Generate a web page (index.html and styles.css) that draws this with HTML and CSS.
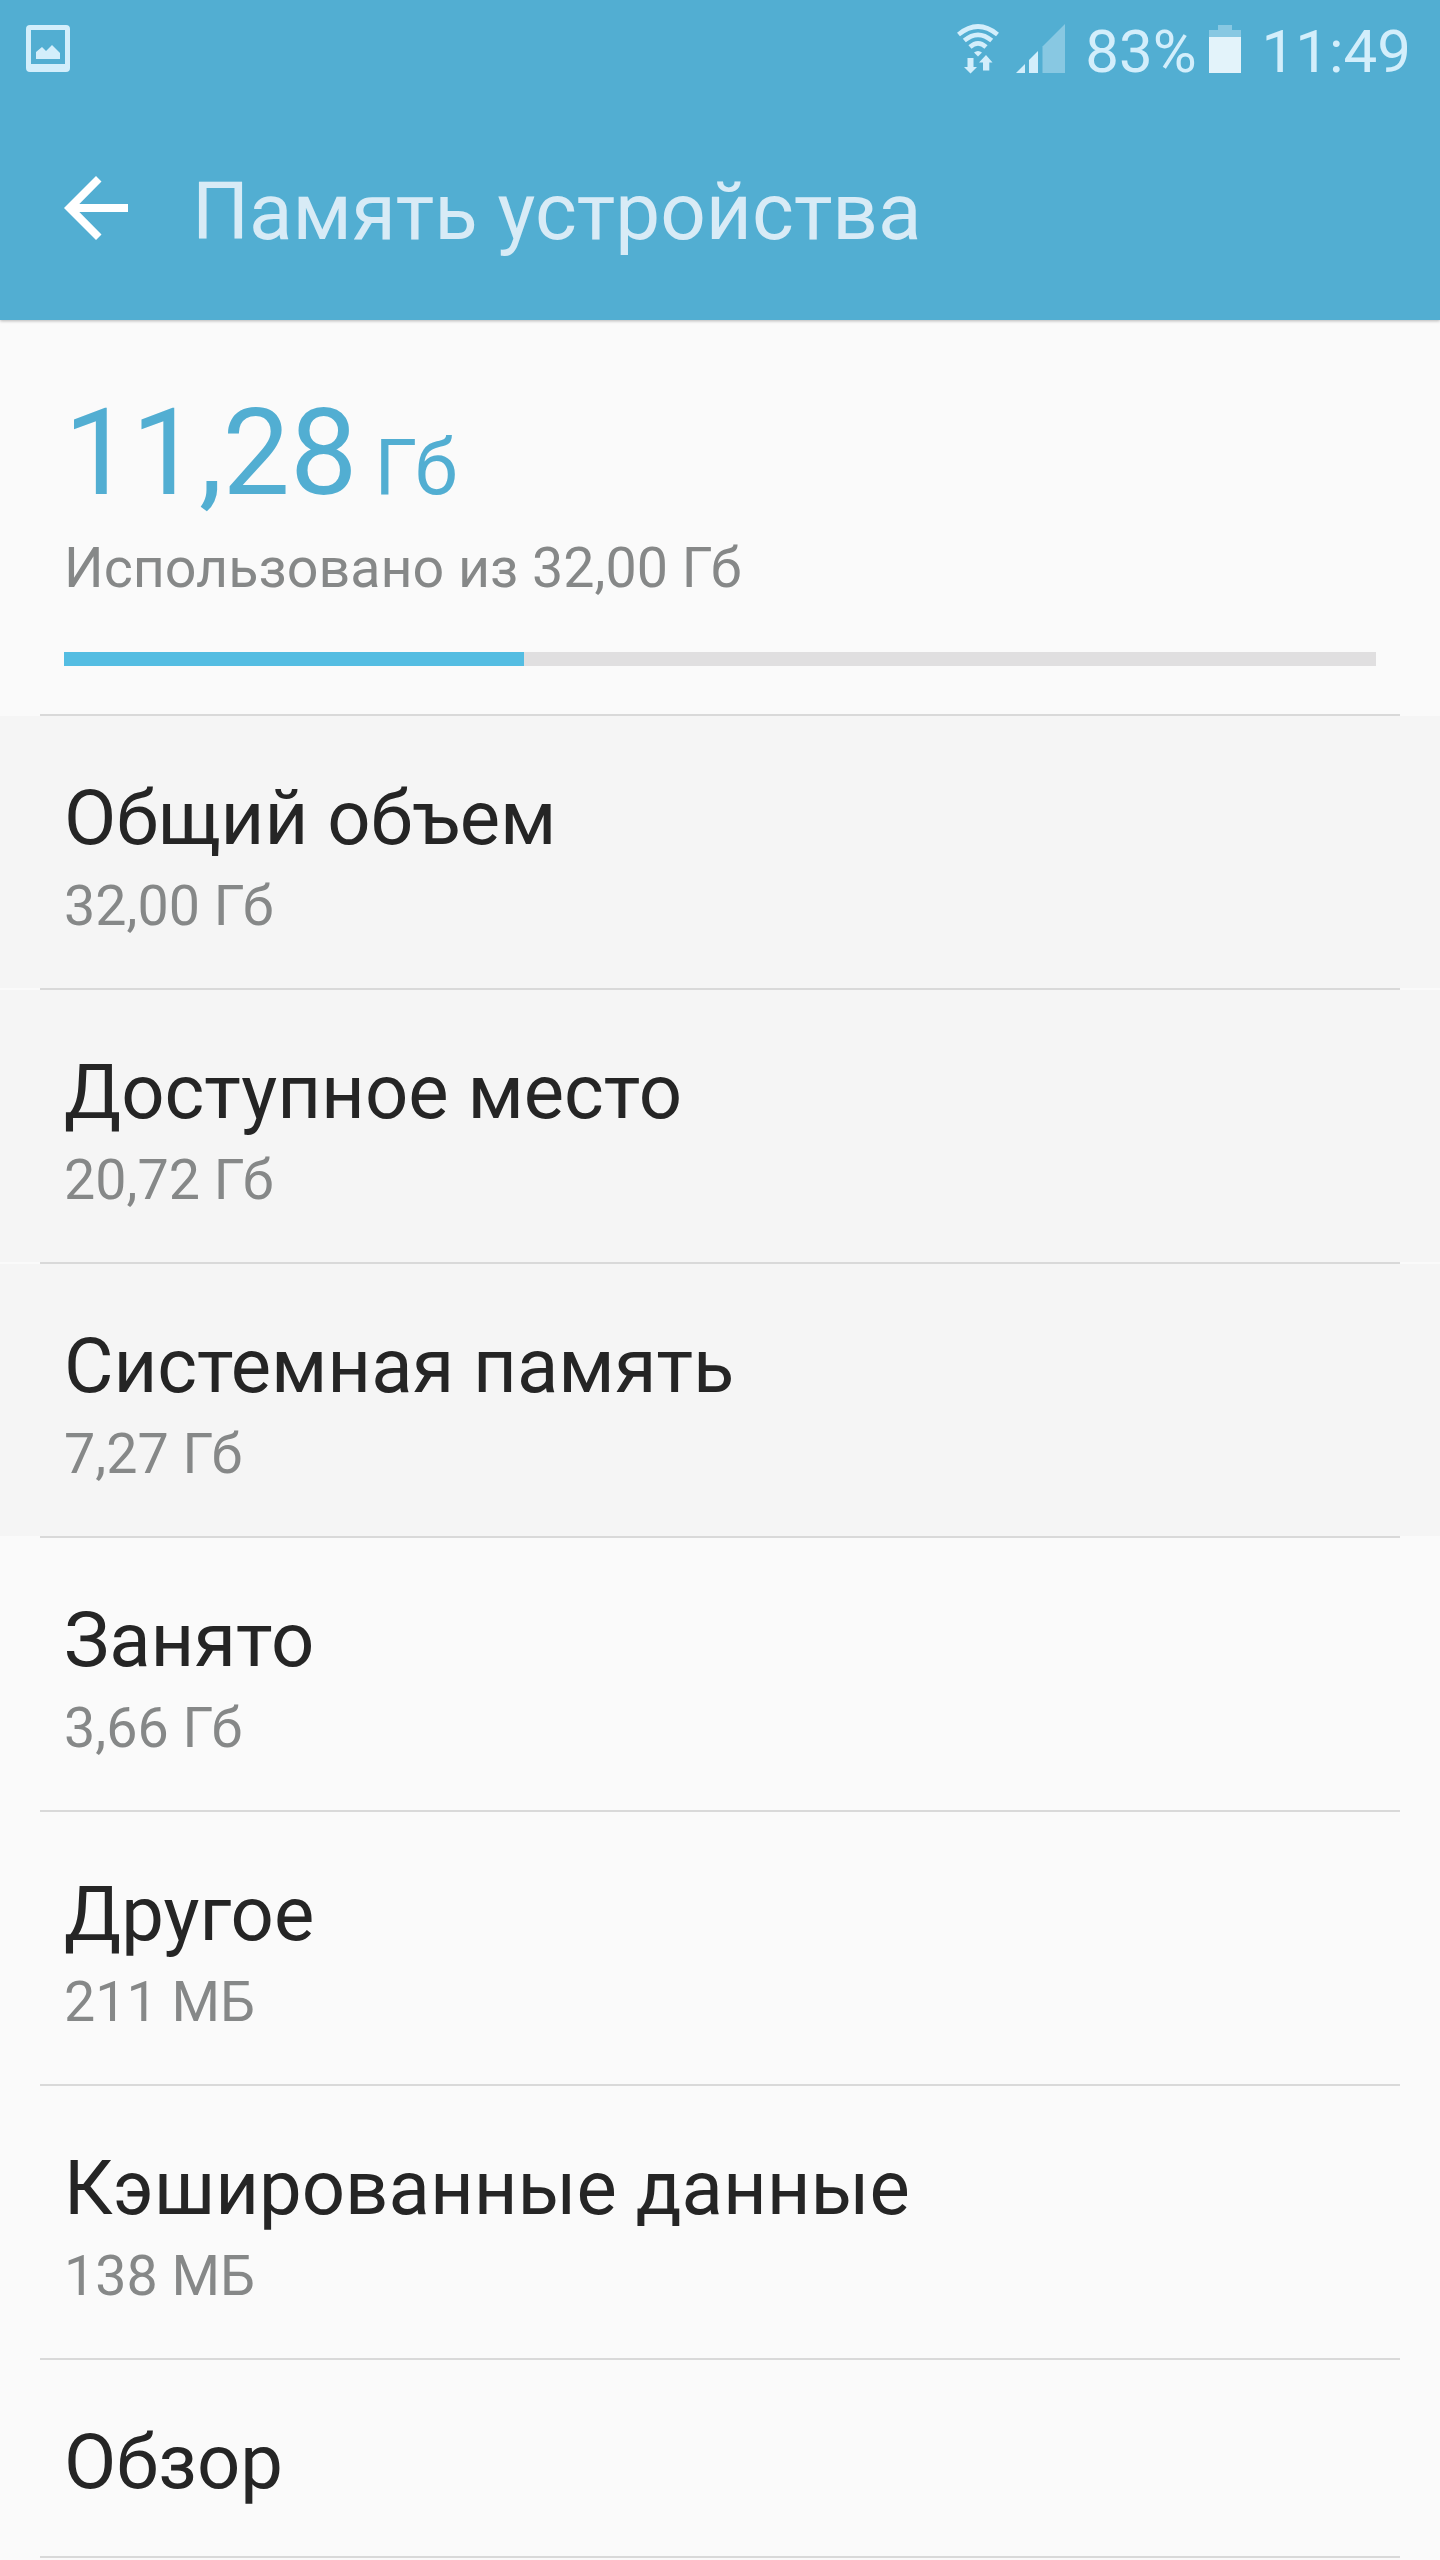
FILE: index.html
```
<!DOCTYPE html>
<html lang="ru">
  <head>
    <meta charset="UTF-8" />
    <meta name="viewport" content="width=device-width, initial-scale=1.0" />
    <title>Память устройства</title>
    <link rel="stylesheet" href="styles.css">
  </head>
  <body>
    <header>
      <div class="status-bar">
        <svg class="picture-icon" width="44" height="48" viewBox="0 0 44 48">
          <path fill-rule="evenodd" d="M4 0H40Q44 0 44 4V43Q44 47 40 47H4Q0 47 0 43V4Q0 0 4 0ZM5 5V39H39V5Z" />
          <path d="M10 34V27L16 22L20 26L26 20L34 28V34Z" />
        </svg>
        <div class="status-right">
          <svg class="wifi-icon" width="42" height="50" viewBox="0 0 42 50">
            <g fill="none" stroke="#d3eefb" stroke-width="4.6">
              <path d="M1.5 10.5Q21 -5.5 40.5 10.5" />
              <path d="M7.3 16.6Q21 5 34.7 16.6" />
              <path d="M13 23Q21 15.7 29 23" />
            </g>
            <path d="M17 28.5Q21 25.5 25 28.5L21 32.5Z" />
            <path d="M10.5 34H16.5V43H20L13.5 49.5L7 43H10.5Z" />
            <path d="M29 31L35.5 38.5H32.3V46.5H26V38.5H22Z" />
          </svg>
          <svg class="signal-icon" width="50" height="50" viewBox="0 0 50 50">
            <path d="M0 49L9 40V49Z" />
            <path d="M13 49V36L22 27V49Z" />
            <path class="dim" d="M26.5 49V22.5L49 0V49Z" />
          </svg>
          <span class="percent">83%</span>
          <svg class="battery-icon" width="32" height="48" viewBox="0 0 32 48">
            <path class="dim" d="M9 0H23V5H32V12H0V5H9Z" />
            <path class="level" d="M0 12H32V48H0Z" />
          </svg>
          <span class="clock">11:49</span>
        </div>
      </div>
      <div class="app-bar">
        <svg class="back" width="64" height="64" viewBox="0 0 64 64">
          <path d="M64 28V36H15.3L37.5 58.5L32 64L0 32L32 0L37.5 5.5L15.3 28Z" />
        </svg>
        <h1>Память устройства</h1>
      </div>
    </header>

    <section class="summary">
      <div class="used"><span class="number">11,28</span><span class="unit">Гб</span></div>
      <p>Использовано из 32,00 Гб</p>
      <div class="progress"><div class="fill"></div></div>
    </section>

    <ul>
      <li class="gray">
        <h2>Общий объем</h2>
        <p>32,00 Гб</p>
      </li>
      <li class="gray">
        <h2>Доступное место</h2>
        <p>20,72 Гб</p>
      </li>
      <li class="gray">
        <h2>Системная память</h2>
        <p>7,27 Гб</p>
      </li>
      <li>
        <h2>Занято</h2>
        <p>3,66 Гб</p>
      </li>
      <li>
        <h2>Другое</h2>
        <p>211 МБ</p>
      </li>
      <li>
        <h2>Кэшированные данные</h2>
        <p>138 МБ</p>
      </li>
      <li class="short">
        <h2>Обзор</h2>
      </li>
    </ul>
  </body>
</html>
```
FILE: styles.css
```
body {
  font-family: Roboto, "Noto Sans", sans-serif;
  color: #252525;
  background-color: #fafafa;
  margin: 0;
  padding: 0;
}
h1,
h2,
p,
ul {
  margin: 0;
  padding: 0;
  font-weight: normal;
}
svg {
  display: block;
  flex: none;
}
header {
  height: 320px;
  background: #52aed2;
  box-shadow: 0 1px 3px rgba(0, 0, 0, 0.28);
}
.status-bar {
  display: flex;
  justify-content: space-between;
  align-items: flex-start;
  box-sizing: border-box;
  height: 96px;
  padding: 24px 29px 0 26px;
  fill: #d3eefb;
}
.picture-icon {
  margin-top: 1px;
}
.status-right {
  display: flex;
  color: #d3eefb;
  font-size: 60px;
  line-height: 56px;
}
.signal-icon {
  margin-left: 17px;
}
.percent {
  margin-left: 19px;
}
.battery-icon {
  margin: 1px 0 0 12px;
}
.clock {
  margin-left: 21px;
}
.dim {
  fill: #88c8e2;
}
.level {
  fill: #e3f3fa;
}
.app-bar {
  display: flex;
  align-items: center;
  height: 224px;
  padding-left: 64px;
}
.back {
  fill: #fff;
}
h1 {
  margin-left: 64px;
  padding-top: 7px;
  font-size: 80px;
  line-height: 94px;
  color: #d8ebf6;
}
.summary {
  box-sizing: border-box;
  height: 394px;
  padding: 62px 64px 0;
}
.used {
  display: flex;
  align-items: baseline;
  height: 142px;
  color: #52aed2;
  line-height: 142px;
}
.number {
  font-size: 120px;
}
.unit {
  margin-left: 17px;
  font-size: 77px;
}
.summary p {
  margin-top: 11px;
}
p {
  font-size: 55.6px;
  line-height: 66px;
  color: #868888;
}
.progress {
  height: 14px;
  margin-top: 51px;
  background: #e0dfe0;
}
.fill {
  width: 35.06%;
  height: 14px;
  background: #54bde2;
}
ul {
  list-style: none;
}
li {
  box-sizing: border-box;
  height: 274px;
  padding: 59px 64px 0;
  /* inset divider on the top edge */
  background: linear-gradient(#d9d9d9, #d9d9d9) 40px 0 / 1360px 2px no-repeat;
}
li.gray {
  background: linear-gradient(#d9d9d9, #d9d9d9) 40px 0 / 1360px 2px no-repeat,
    linear-gradient(#f5f5f5, #f5f5f5) 0 2px / 100% 272px no-repeat;
}
li.short {
  height: 202px;
  background: linear-gradient(#d9d9d9, #d9d9d9) 40px 0 / 1360px 2px no-repeat,
    linear-gradient(#d9d9d9, #d9d9d9) 40px 198px / 1360px 2px no-repeat;
}
h2 {
  font-size: 76px;
  line-height: 90px;
}
li p {
  margin-top: 10px;
}
```
